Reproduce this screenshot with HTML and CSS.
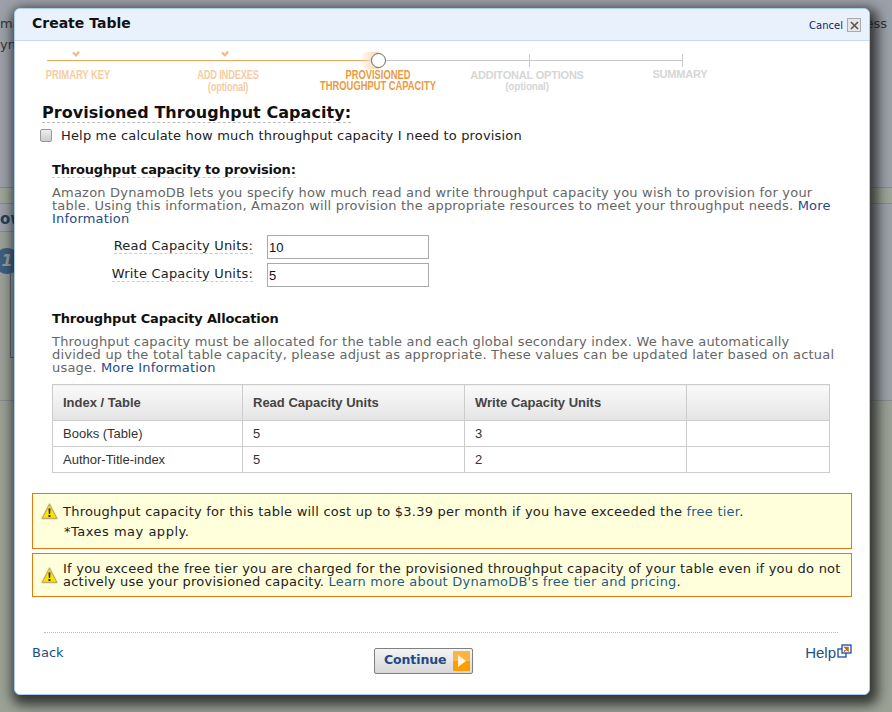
FILE: index.html
```html
<!DOCTYPE html>
<html lang="en">
<head>
    <meta charset="UTF-8">
    <title>Create Table</title>
    <link rel="stylesheet" href="styles.css">
</head>
<body>
    <!-- page behind the dialog -->
    <div class="backdrop">
        <div class="bg-text bg-text-1"><span>ma</span><span>ess</span></div>
        <div class="bg-text bg-text-2">yn</div>
        <div class="bg-band"></div>
        <div class="bg-left"></div>
        <div class="bg-ow">ow</div>
        <div class="bg-box"></div>
        <div class="bg-num">1</div>
        <div class="bg-lower"></div>
    </div>

    <div class="dialog">
        <div class="dialog-head">
            <div class="dialog-title">Create Table</div>
            <div class="cancel">
                <a href="#">Cancel</a>
                <span class="close-x">
                    <svg width="9" height="9" viewBox="0 0 9 9"><path d="M1 1l7 7M8 1L1 8" stroke="#555" stroke-width="1.6"/></svg>
                </span>
            </div>
        </div>

        <div class="wizard">
            <div class="track">
                <div class="track-done"></div>
                <div class="track-todo"></div>
                <svg class="check check-1" width="8" height="7" viewBox="0 0 8 7"><path d="M1 2.500l3 2.800 3-3.800" fill="none" stroke="#f0bb85" stroke-width="2.200"/></svg>
                <svg class="check check-2" width="8" height="7" viewBox="0 0 8 7"><path d="M1 2.500l3 2.800 3-3.800" fill="none" stroke="#f0bb85" stroke-width="2.200"/></svg>
                <div class="current-glow"></div>
                <div class="current-dot"></div>
                <div class="tick tick-1"></div>
                <div class="tick tick-2"></div>
            </div>
            <div class="step done step-1">PRIMARY KEY</div>
            <div class="step done step-2">ADD INDEXES<small>(optional)</small></div>
            <div class="step active step-3">PROVISIONED<br>THROUGHPUT CAPACITY</div>
            <div class="step todo step-4">ADDITONAL OPTIONS<small>(optional)</small></div>
            <div class="step todo step-5">SUMMARY</div>
        </div>

        <div class="dialog-body">
            <h2 class="main-heading"><span>Provisioned Throughput Capacity:</span></h2>
            <label class="calc-row"><input type="checkbox"> Help me calculate how much throughput capacity I need to provision</label>

            <div class="section">
                <h3 class="sub-heading dashed"><span>Throughput capacity to provision:</span></h3>
                <p class="desc">Amazon DynamoDB lets you specify how much read and write throughput capacity you wish to provision for your table. Using this information, Amazon will provision the appropriate resources to meet your throughput needs. <a href="#">More Information</a></p>

                <div class="field">
                    <span class="field-label">Read Capacity Units:</span>
                    <input class="field-input" type="text" value="10">
                </div>
                <div class="field">
                    <span class="field-label">Write Capacity Units:</span>
                    <input class="field-input" type="text" value="5">
                </div>

                <h3 class="sub-heading alloc">Throughput Capacity Allocation</h3>
                <p class="desc">Throughput capacity must be allocated for the table and each global secondary index. We have automatically divided up the total table capacity, please adjust as appropriate. These values can be updated later based on actual usage. <a href="#">More Information</a></p>

                <table class="alloc-table">
                    <thead>
                        <tr>
                            <th class="col-1">Index / Table</th>
                            <th class="col-2">Read Capacity Units</th>
                            <th class="col-3">Write Capacity Units</th>
                            <th></th>
                        </tr>
                    </thead>
                    <tbody>
                        <tr><td>Books (Table)</td><td>5</td><td>3</td><td></td></tr>
                        <tr><td>Author-Title-index</td><td>5</td><td>2</td><td></td></tr>
                    </tbody>
                </table>
            </div>

            <div class="notice notice-cost">
                <svg class="warn" width="17" height="17" viewBox="0 0 17 17"><path d="M8.500 1L1 15.500h15z" fill="#f7e600" stroke="#c9a862" stroke-width="1.300" stroke-linejoin="round"/><path d="M7.500 5.500h2l-.4 5.500H7.900z" fill="#222"/><rect x="7.500" y="12" width="2" height="2" fill="#222"/></svg>
                <div>
                    <div>Throughput capacity for this table will cost up to $3.39 per month if you have exceeded the <a href="#">free tier</a>.</div>
                    <div class="taxes">*Taxes may apply.</div>
                </div>
            </div>
            <div class="notice notice-tier">
                <svg class="warn" width="17" height="17" viewBox="0 0 17 17"><path d="M8.500 1L1 15.500h15z" fill="#f7e600" stroke="#c9a862" stroke-width="1.300" stroke-linejoin="round"/><path d="M7.500 5.500h2l-.4 5.500H7.900z" fill="#222"/><rect x="7.500" y="12" width="2" height="2" fill="#222"/></svg>
                <div>If you exceed the free tier you are charged for the provisioned throughput capacity of your table even if you do not actively use your provisioned capacity. <a href="#">Learn more about DynamoDB's free tier and pricing</a>.</div>
            </div>
        </div>

        <div class="dialog-foot">
            <a class="back" href="#">Back</a>
            <button class="continue" type="button">Continue
                <span class="continue-arrow"><svg width="10" height="14" viewBox="0 0 10 14"><path d="M1 1l8 6-8 6z" fill="#fff3dc"/></svg></span>
            </button>
            <a class="help" href="#">Help<svg width="15" height="14" viewBox="0 0 15 14"><rect x="1" y="5" width="8" height="8" fill="#fff" stroke="#0a3d9c" stroke-width="1.200"/><rect x="5" y="1" width="9" height="8" fill="#fff" stroke="#0a3d9c" stroke-width="1.200"/><path d="M7 7.500l3.500-3.500M8 3.500h3v3z" stroke="#c8650a" stroke-width="1.500" fill="#c8650a"/></svg></a>
        </div>
    </div>
</body>
</html>
```

FILE: styles.css
```css
html, body {
    margin: 0;
    padding: 0;
    height: 100%;
    overflow: hidden;
}
body {
    position: relative;
    width: 892px;
    height: 712px;
    background-color: #9ca1a9;
    font-family: "DejaVu Sans", Verdana, sans-serif;
    color: #222;
}
a {
    color: #1a4f8a;
    text-decoration: none;
}

/* backdrop */
.backdrop {
    position: absolute;
    inset: 0;
    background-color: #9ca1a9;
}
.bg-text {
    position: absolute;
    left: 0;
    right: 5px;
    font-size: 13px;
    color: #333;
    display: flex;
    justify-content: space-between;
}
.bg-text-1 {
    top: 16px;
}
.bg-text-2 {
    top: 37px;
}
.bg-band {
    position: absolute;
    left: 0;
    right: 0;
    top: 187px;
    height: 15px;
    background-color: #9ca598;
    border-top: 1px solid #868b8e;
    border-bottom: 1px solid #868b8e;
}
.bg-left {
    position: absolute;
    left: 0;
    width: 14px;
    top: 231px;
    height: 169px;
    background-color: #9ba198;
    border-top: 1px solid #868b8e;
}
.bg-ow {
    position: absolute;
    left: 0;
    top: 210px;
    font-size: 15px;
    font-weight: bold;
    color: #23405c;
}
.bg-num {
    position: absolute;
    left: -6px;
    top: 248px;
    width: 26px;
    height: 26px;
    border-radius: 50%;
    background-color: #3e5f82;
    color: #9aa09a;
    font-style: italic;
    font-weight: bold;
    line-height: 26px;
    text-align: center;
}
.bg-box {
    position: absolute;
    left: 10px;
    top: 270px;
    width: 10px;
    height: 86px;
    border: 1px solid #5c6270;
}
.bg-lower {
    position: absolute;
    left: 0;
    right: 0;
    top: 400px;
    bottom: 0;
    background-color: #9ba195;
    border-top: 1px solid #868b8e;
}

/* dialog */
.dialog {
    position: absolute;
    left: 14px;
    top: 8px;
    width: 854px;
    height: 685px;
    background-color: #fff;
    border: 1px solid #a9cdea;
    border-radius: 6px;
    box-shadow: 3px 5px 12px 5px rgba(20, 20, 20, 0.75);
}
.dialog-head {
    height: 31px;
    background-color: #e9f1fc;
    border-bottom: 1px solid #c2dcf2;
    border-radius: 5px 5px 0 0;
    display: flex;
    justify-content: space-between;
}
.dialog-title {
    padding: 6px 0 0 17px;
    font-size: 14px;
    font-weight: bold;
    color: #111;
}
.cancel {
    display: flex;
    align-items: center;
    align-self: flex-start;
    gap: 4px;
    padding: 9px 8px 0 0;
    font-size: 10px;
}
.cancel a {
    color: #111c6e;
}
.close-x {
    width: 12px;
    height: 12px;
    border: 1px solid #aaa;
    background-color: #e6e6e6;
    display: flex;
    align-items: center;
    justify-content: center;
}

/* wizard steps */
.wizard {
    position: relative;
    height: 60px;
    font-family: "Liberation Sans", Arial, sans-serif;
    font-weight: bold;
    font-size: 12px;
    line-height: 11px;
    text-align: center;
}
.track {
    position: absolute;
    left: 0;
    right: 0;
    top: 0;
    height: 40px;
}
.track-done {
    position: absolute;
    left: 32px;
    top: 19px;
    width: 320px;
    height: 1px;
    background-color: #eba760;
}
.track-todo {
    position: absolute;
    left: 352px;
    top: 19px;
    width: 315px;
    height: 1px;
    background-color: #c9c9c9;
}
.check {
    position: absolute;
    top: 9px;
}
.check-1 {
    left: 57px;
}
.check-2 {
    left: 206px;
}
.current-glow {
    position: absolute;
    left: 344px;
    top: 11px;
    width: 20px;
    height: 17px;
    border-radius: 50% 0 0 50%;
    background: linear-gradient(to right, rgba(245, 190, 130, 0), #f8d3aa);
}
.current-dot {
    position: absolute;
    left: 356px;
    top: 12px;
    width: 13px;
    height: 13px;
    border: 1.500px solid #666;
    border-radius: 50%;
    background-color: #fff;
}
.tick {
    position: absolute;
    top: 13px;
    width: 1px;
    height: 13px;
    background-color: #c9c9c9;
}
.tick-1 {
    left: 514px;
}
.tick-2 {
    left: 667px;
}
.step {
    position: absolute;
    white-space: nowrap;
    top: 29px;
}
.step small {
    display: block;
    font-size: 12px;
    margin-top: 1px;
}
.step.done,
.step.active {
    transform: translateX(-50%) scaleX(0.78);
}
.step.done {
    color: #f6cda3;
}
.step.active {
    color: #ec9a42;
}
.step.todo {
    transform: translateX(-50%);
    color: #d6d6d6;
    font-size: 11px;
    letter-spacing: -0.2px;
}
.step.todo small {
    font-size: 10px;
    margin-top: 0;
}
.step-1 {
    left: 63px;
}
.step-2 {
    left: 213px;
    letter-spacing: -0.3px;
}
.step-3 {
    left: 363px;
}
.step-4 {
    left: 512px;
}
.step-5 {
    left: 665px;
    top: 28px;
}

/* body */
.dialog-body {
    padding: 1px 17px 0;
    font-size: 13px;
    line-height: 13px;
}
.main-heading {
    margin: 0 0 0 10px;
    font-size: 16px;
    line-height: 22px;
    letter-spacing: 0.05px;
    color: #111;
}
.main-heading span {
    border-bottom: 1px dashed #bbb;
}
.calc-row {
    display: flex;
    align-items: center;
    margin: 4px 0 0 8px;
    font-size: 13px;
    line-height: 15px;
    letter-spacing: 0.17px;
    color: #222;
}
.calc-row input {
    appearance: none;
    box-sizing: border-box;
    margin: 0 9px 0 0;
    width: 12px;
    height: 13px;
    border: 1px solid #999;
    border-radius: 2px;
    background: linear-gradient(to bottom, #eee, #ccc);
}
.section {
    padding: 0 20px;
}
.sub-heading {
    margin: 0;
    font-size: 13px;
    line-height: 16px;
    letter-spacing: -0.17px;
    color: #111;
}
.dashed {
    margin-top: 19px;
}
.dashed span {
    border-bottom: 1px dashed #ccc;
}
.alloc {
    margin-top: 24px;
}
.desc {
    margin: 8px -8px 0 0;
    color: #666;
    font-size: 13px;
    line-height: 13px;
    letter-spacing: 0.2px;
}
.desc a {
    color: #1f4c86;
}
.field {
    display: flex;
    align-items: center;
    justify-content: flex-end;
    width: 377px;
    margin-top: 10px;
}
.field + .field {
    margin-top: 4px;
}
.field-label {
    border-bottom: 1px dashed #ccc;
    line-height: 14px;
    margin: 0 14px 2px 0;
    letter-spacing: 0.2px;
    color: #222;
}
.field-input {
    box-sizing: border-box;
    width: 162px;
    height: 24px;
    border: 1px solid #aaa;
    padding: 0 1px;
    font-family: "Liberation Sans", Arial, sans-serif;
    font-size: 13px;
    color: #111;
}
.alloc-table {
    width: 778px;
    margin-top: 10px;
    border-collapse: collapse;
    table-layout: fixed;
    font-family: "Liberation Sans", Arial, sans-serif;
    font-size: 13px;
}
.alloc-table th,
.alloc-table td {
    border: 1px solid #ccc;
    padding: 0 10px;
    text-align: left;
    color: #333;
}
.alloc-table th {
    height: 35px;
    background: linear-gradient(to bottom, #fafafa, #e4e4e4);
    font-weight: bold;
    color: #444;
}
.alloc-table td {
    height: 25px;
}
.col-1 {
    width: 169px;
}
.col-2 {
    width: 201px;
}
.col-3 {
    width: 201px;
}
.notice {
    display: flex;
    gap: 5px;
    box-sizing: border-box;
    border: 1px solid #e47911;
    background-color: #ffffdc;
    padding: 0 8px;
    color: #222;
    line-height: 13px;
    letter-spacing: 0.23px;
}
.notice a {
    color: #1f5c86;
}
.notice-cost {
    height: 56px;
    margin-top: 20px;
    padding-top: 11px;
}
.notice-tier {
    height: 44px;
    margin-top: 4px;
    padding-top: 8px;
}
.warn {
    flex: none;
    margin-top: -2px;
}
.notice-tier .warn {
    margin-top: 5px;
}
.taxes {
    margin: 7px 0 0 1px;
    letter-spacing: 0.5px;
}

/* footer */
.dialog-foot {
    position: relative;
    margin: 35px 17px 0;
    height: 60px;
}
.dialog-foot::before {
    content: "";
    position: absolute;
    left: 12px;
    right: 14px;
    top: 0;
    border-top: 1px dotted #bbb;
}
.back {
    position: absolute;
    left: 0;
    top: 13px;
    font-size: 13px;
}
.help {
    position: absolute;
    right: 0;
    top: 12px;
    font-family: "Liberation Sans", Arial, sans-serif;
    font-size: 15px;
    display: flex;
    align-items: flex-start;
    gap: 1px;
}
.continue {
    position: absolute;
    left: 342px;
    top: 16px;
    box-sizing: border-box;
    width: 99px;
    height: 26px;
    display: flex;
    align-items: center;
    justify-content: space-between;
    padding: 0 2px 3px 9px;
    border: 1px solid #808080;
    border-radius: 2px;
    background: linear-gradient(to bottom, #f4f4f4, #d8d8d8);
    font-family: "DejaVu Sans", Verdana, sans-serif;
    font-size: 12.5px;
    font-weight: bold;
    letter-spacing: -0.1px;
    color: #1c4a8a;
}
.continue-arrow {
    width: 17px;
    height: 20px;
    margin-bottom: -3px;
    background: linear-gradient(to bottom, #ffb340 50%, #ff9d00 50%);
    display: flex;
    align-items: center;
    justify-content: center;
}
```
